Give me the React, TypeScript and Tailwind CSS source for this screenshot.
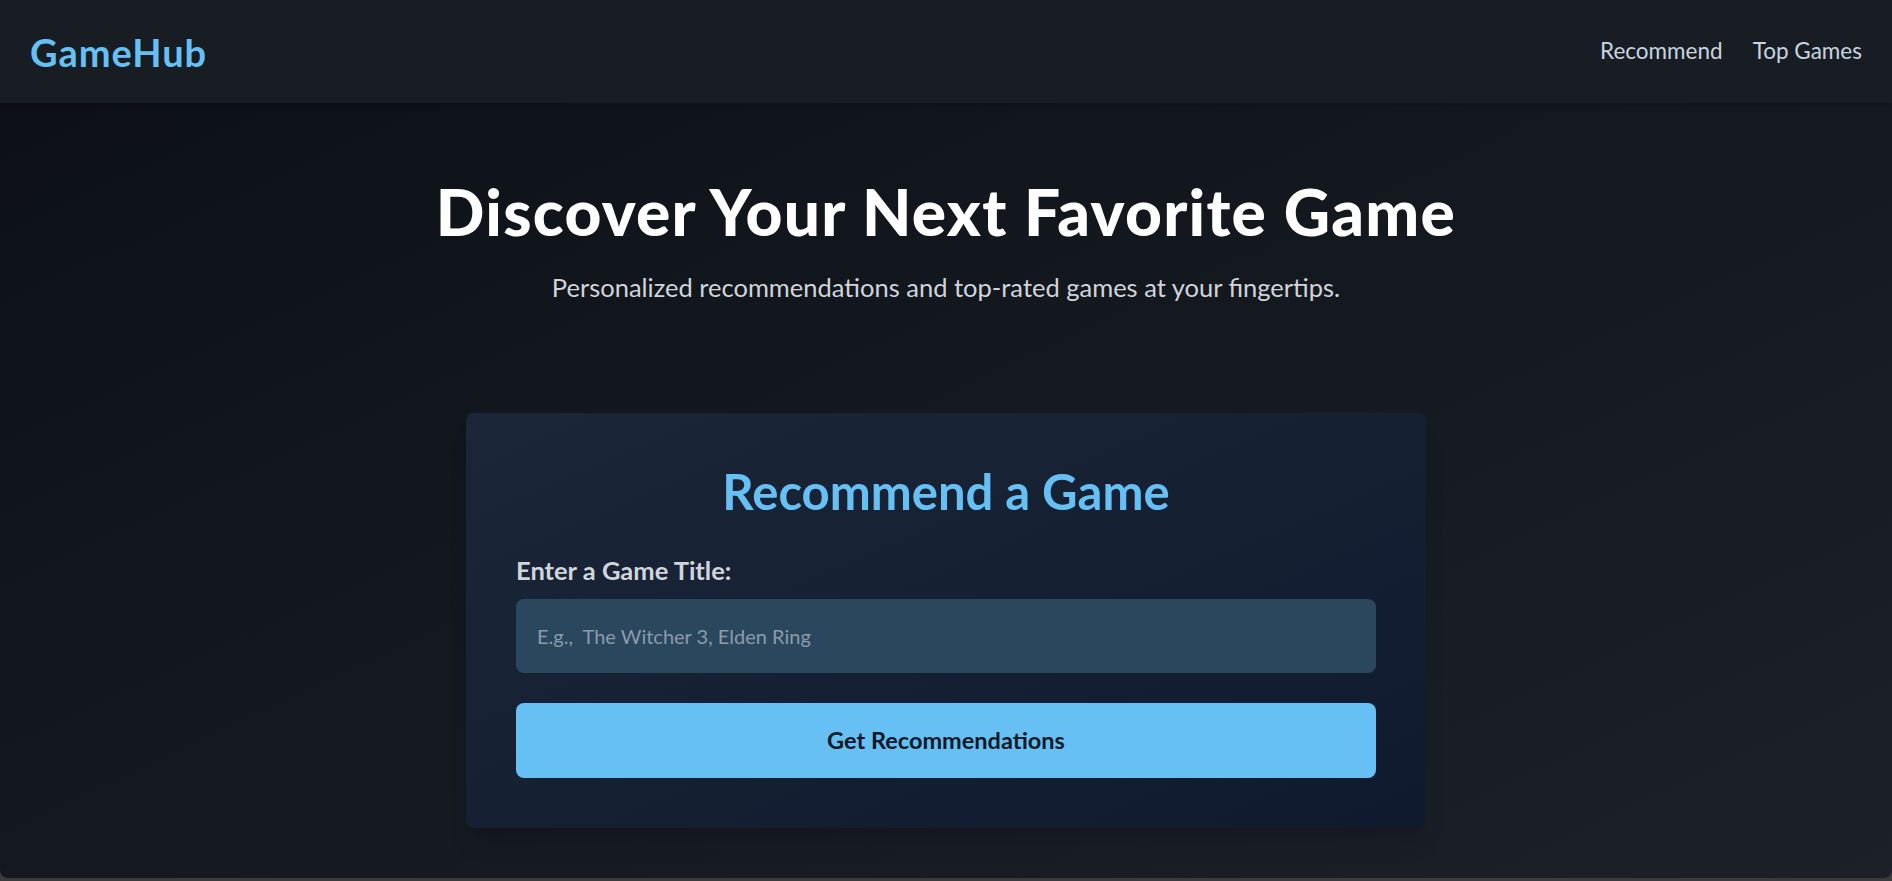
export default function App() {
	return (
		<div className="min-h-screen bg-[#3b3b3b] font-['Lato',sans-serif]">
			<div className="h-[878px] rounded-b-lg overflow-hidden flex flex-col bg-gradient-to-br from-[#0c1016] to-[#1c2129]">
				<header className="h-[103px] shrink-0 flex items-center justify-between px-[30px] bg-[#181c23] shadow-md">
					<a href="#" className="text-[38px] font-bold tracking-[0.025em] text-[#66c0f4] leading-none">
						GameHub
					</a>
					<nav className="flex gap-[30px] text-[22.5px] text-[#c7d5e0] leading-none">
						<a href="#">Recommend</a>
						<a href="#">Top Games</a>
					</nav>
				</header>

				<main className="flex flex-col items-center">
					<h1 className="mt-[77px] text-[64px] font-black tracking-[0.02em] leading-none text-white">
						Discover Your Next Favorite Game
					</h1>
					<p className="mt-[31px] text-[25.5px] leading-none text-[#d1d5db]">
						Personalized recommendations and top-rated games at your fingertips.
					</p>

					<section className="mt-[112px] w-[960px] rounded-lg px-[50px] pt-[54px] pb-[50px] bg-gradient-to-br from-[#1c2639] to-[#101a2e] shadow-xl">
						<h2 className="text-center text-[49px] font-bold leading-none text-[#66c0f4]">
							Recommend a Game
						</h2>
						<label className="block mt-[42px] text-[25.5px] font-bold leading-none text-[#d1d5db]">
							Enter a Game Title:
						</label>
						<input
							type="text"
							placeholder="E.g.,  The Witcher 3, Elden Ring"
							className="mt-[16px] w-full h-[74px] rounded-lg bg-[#2a475e] px-[21px] text-[20px] text-white placeholder:text-[#8b9bab] outline-none"
						/>
						<button className="mt-[30px] w-full h-[75px] rounded-lg bg-[#66c0f4] text-[23.5px] font-bold text-[#111827]">
							Get Recommendations
						</button>
					</section>
				</main>
			</div>
		</div>
	)
}
